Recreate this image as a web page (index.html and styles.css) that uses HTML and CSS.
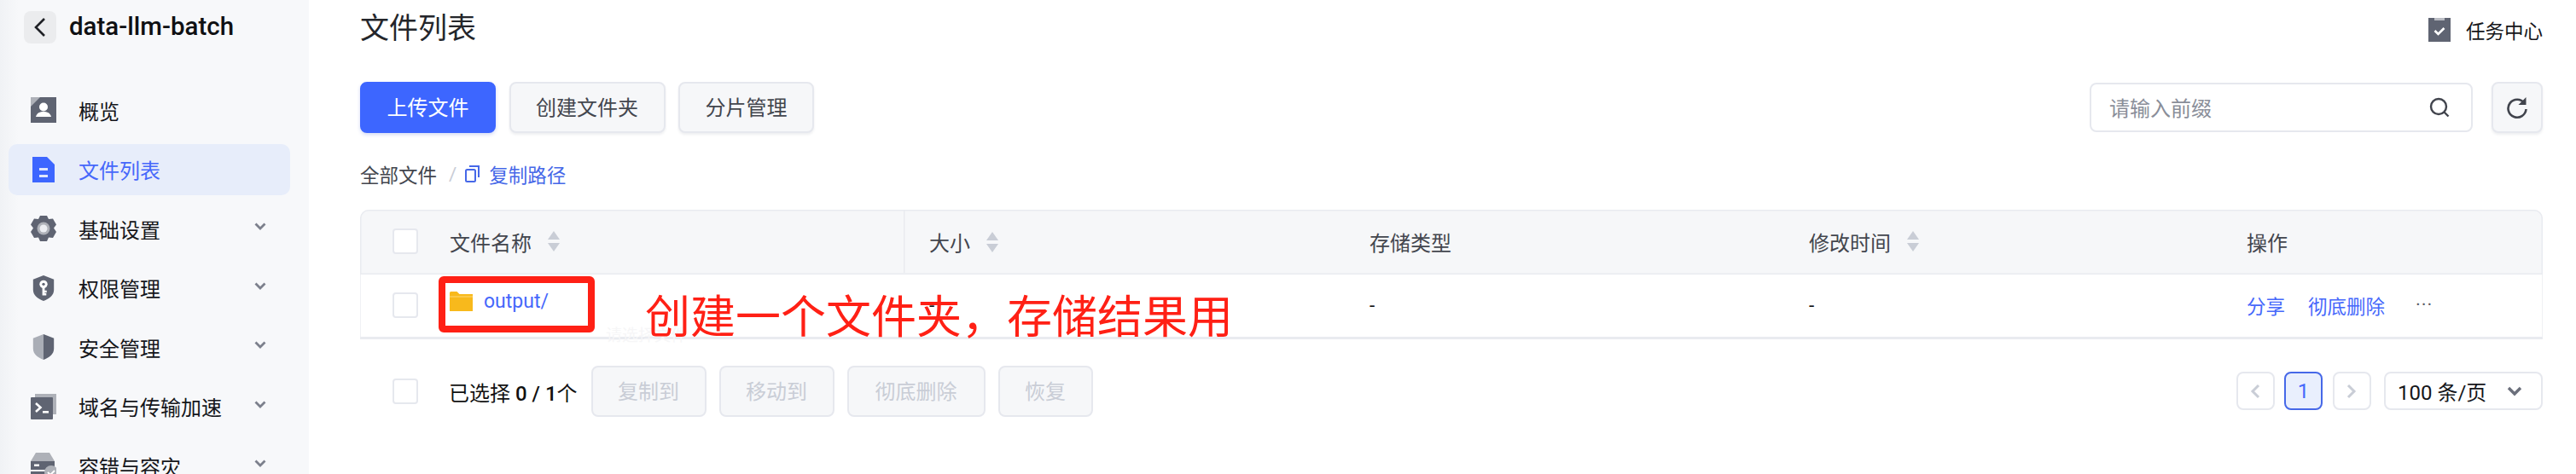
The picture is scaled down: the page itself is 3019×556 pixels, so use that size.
FILE: index.html
```html
<!DOCTYPE html>
<html lang="zh-CN">
<head>
<meta charset="utf-8">
<title>文件列表</title>
<link rel="stylesheet" href="styles.css">
</head>
<body>
<div class="app">
  <aside class="sidebar">
    <div class="bucket">
      <span class="back"><svg width="18" height="24" viewBox="0 0 18 24"><path d="M14 2 4 12l10 10" fill="none" stroke="#1f2126" stroke-width="2.6"/></svg></span>
      <span class="bucket-name">data-llm-batch</span>
    </div>
    <nav class="nav">
      <a class="nav-item">
        <svg class="nav-icon" viewBox="0 0 30 30"><path d="M0 0h30v30H0z" fill="#5f6472"/><path d="M0 0h11L0 11z" fill="#aeb1b8"/><circle cx="15" cy="11.500" r="5" fill="#fff"/><path d="M6 23c1-4.500 5-6 9-6s8 1.500 9 6z" fill="#fff"/></svg>
        <span>概览</span>
      </a>
      <a class="nav-item active">
        <svg class="nav-icon" viewBox="0 0 30 30"><path d="M2 0h17l9 9v21H2z" fill="#3d66ff"/><path d="M10 13h10v3H10zM10 21h10v3H10z" fill="#dfe6fb"/></svg>
        <span>文件列表</span>
      </a>
      <a class="nav-item">
        <svg class="nav-icon" viewBox="0 0 30 30"><path d="M11 0h8l2 4 5-.5 4 7-3 4 3 4.500-4 7-5-.5-2 4.500h-8l-2-4.500-5 .5-4-7 3-4.500-3-4 4-7 5 .5z" fill="#5f6472"/><circle cx="15" cy="15" r="7.500" fill="#aeb1b8"/><circle cx="15" cy="15" r="4.500" fill="#eceef2"/></svg>
        <span>基础设置</span>
        <svg class="chev" viewBox="0 0 14 10"><path d="M1.500 1.500 7 7l5.500-5.500" fill="none" stroke="#7c808c" stroke-width="2.800"/></svg>
      </a>
      <a class="nav-item">
        <svg class="nav-icon" viewBox="0 0 30 32"><path d="M15 0 28 5v13c0 7-6 11-13 14C8 29 2 25 2 18V5z" fill="#5f6472"/><circle cx="15" cy="11" r="5" fill="#fff"/><circle cx="15" cy="11" r="1.800" fill="#5f6472"/><path d="M13.500 15h3v10h-3zM16 19h3v2.500h-3zM16 22.500h2.500V25H16z" fill="#fff"/></svg>
        <span>权限管理</span>
        <svg class="chev" viewBox="0 0 14 10"><path d="M1.500 1.500 7 7l5.500-5.500" fill="none" stroke="#7c808c" stroke-width="2.800"/></svg>
      </a>
      <a class="nav-item">
        <svg class="nav-icon" viewBox="0 0 30 32"><path d="M15 0 2 5v13c0 7 6 11 13 14z" fill="#aaaeb6"/><path d="M15 0 28 5v13c0 7-6 11-13 14z" fill="#5f6472"/></svg>
        <span>安全管理</span>
        <svg class="chev" viewBox="0 0 14 10"><path d="M1.500 1.500 7 7l5.500-5.500" fill="none" stroke="#7c808c" stroke-width="2.800"/></svg>
      </a>
      <a class="nav-item">
        <svg class="nav-icon" viewBox="0 0 30 30"><path d="M5 0h25v24h-5V5H5z" fill="#aeb1b8"/><rect x="0" y="4" width="26" height="26" rx="1" fill="#5f6472"/><path d="m6 11 5.500 5L6 21" fill="none" stroke="#fff" stroke-width="2.600"/><path d="M14 20h7v2.600h-7z" fill="#fff"/></svg>
        <span>域名与传输加速</span>
        <svg class="chev" viewBox="0 0 14 10"><path d="M1.500 1.500 7 7l5.500-5.500" fill="none" stroke="#7c808c" stroke-width="2.800"/></svg>
      </a>
      <a class="nav-item">
        <svg class="nav-icon" viewBox="0 0 30 30"><path d="M6 0h16l6 10H0z" fill="#aeb1b8"/><path d="M0 10h28v10H0zM0 22h28v8H0z" fill="#5f6472"/><path d="M4 13.500h6v2.500H4z" fill="#fff"/><circle cx="24" cy="23" r="8" fill="#aeb1b8"/><path d="m20 23 3 3 5-5" fill="none" stroke="#fff" stroke-width="2"/></svg>
        <span>容错与容灾</span>
        <svg class="chev" viewBox="0 0 14 10"><path d="M1.500 1.500 7 7l5.500-5.500" fill="none" stroke="#7c808c" stroke-width="2.800"/></svg>
      </a>
    </nav>
  </aside>

  <main class="main">
    <header class="title-row">
      <h1 class="title">文件列表</h1>
      <a class="task-center">
        <svg class="task-icon" viewBox="0 0 26 28"><path d="M0 0h26v28H0z" fill="#5f6472"/><path d="M7 0h12v3H7z" fill="#b9bcc3"/><path d="m7.500 15 4 4 7-7" fill="none" stroke="#fff" stroke-width="2.600"/></svg>
        <span>任务中心</span>
      </a>
    </header>

    <div class="toolbar">
      <div class="btn-group">
        <button class="btn primary">上传文件</button>
        <button class="btn">创建文件夹</button>
        <button class="btn">分片管理</button>
      </div>
      <div class="tools">
        <div class="search">
          <span class="placeholder">请输入前缀</span>
          <svg class="search-icon" viewBox="0 0 24 24"><circle cx="11" cy="11" r="9" fill="none" stroke="#41444d" stroke-width="2.400"/><path d="m17.500 17.500 5 5" stroke="#41444d" stroke-width="2.400"/></svg>
        </div>
        <button class="btn icon-btn"><svg width="26" height="28" viewBox="0 0 26 28"><path d="M21.500 9A10.500 10.500 0 1 0 23.500 16" fill="none" stroke="#41444d" stroke-width="2.600"/><path d="M23.500 2v9h-9z" fill="#41444d"/></svg></button>
      </div>
    </div>

    <div class="crumbs">
      <span class="crumb">全部文件</span>
      <span class="sep">/</span>
      <a class="copy-path">
        <svg width="17" height="20" viewBox="0 0 17 20"><rect x="1" y="5" width="11" height="14" rx="1.500" fill="none" stroke="#4668e8" stroke-width="2"/><path d="M5 1h11v13" fill="none" stroke="#4668e8" stroke-width="2"/></svg>
        <span>复制路径</span>
      </a>
    </div>

    <section class="table">
      <div class="row head">
        <div class="cell check"><span class="checkbox"></span></div>
        <div class="cell">文件名称<span class="sort"></span></div>
        <div class="cell divided">大小<span class="sort"></span></div>
        <div class="cell">存储类型</div>
        <div class="cell">修改时间<span class="sort"></span></div>
        <div class="cell ops-head">操作</div>
      </div>
      <div class="row body">
        <div class="cell check"><span class="checkbox"></span></div>
        <div class="cell file">
          <svg class="folder" viewBox="0 0 27 23"><path d="M0 1.500Q0 0 1.500 0h7l3 3H27v20H0z" fill="#f8b91c"/><path d="M0 6h27" stroke="#fdd877" stroke-width="1"/></svg>
          <a class="file-link">output/</a>
        </div>
        <div class="cell">-</div>
        <div class="cell">-</div>
        <div class="cell">-</div>
        <div class="cell actions">
          <a>分享</a>
          <a>彻底删除</a>
          <span class="more">···</span>
        </div>
      </div>
    </section>

    <footer class="footer">
      <div class="selection">
        <span class="checkbox"></span>
        <span class="count">已选择 <b class="num">0 / 1</b>个</span>
        <div class="batch">
          <button class="btn disabled">复制到</button>
          <button class="btn disabled">移动到</button>
          <button class="btn disabled">彻底删除</button>
          <button class="btn disabled">恢复</button>
        </div>
      </div>
      <div class="pager">
        <span class="page"><svg width="12" height="18" viewBox="0 0 12 18"><path d="M10 2 3 9l7 7" fill="none" stroke="#c9cdd6" stroke-width="3"/></svg></span>
        <span class="page current">1</span>
        <span class="page"><svg width="12" height="18" viewBox="0 0 12 18"><path d="m2 2 7 7-7 7" fill="none" stroke="#c9cdd6" stroke-width="3"/></svg></span>
        <span class="page-size">100 条/页<svg width="18" height="12" viewBox="0 0 18 12"><path d="m2 2 7 7 7-7" fill="none" stroke="#6b6f7b" stroke-width="3.400"/></svg></span>
      </div>
    </footer>

    <div class="ghost">请选择文件</div>
    <div class="red-box"></div>
    <div class="annotation">创建一个文件夹，存储结果用</div>
  </main>
</div>
</body>
</html>
```

FILE: styles.css
```css
* { box-sizing: border-box; }
html, body { margin: 0; height: 100%; }
body {
  background: #fff;
  color: #111;
  font-family: Roboto, "Noto Sans CJK SC", sans-serif;
  font-size: 22.5px;
  overflow: hidden;
}
button { font: inherit; }
a { color: inherit; text-decoration: none; }

.app { display: flex; width: 3019px; height: 556px; overflow: hidden; }

.sidebar {
  flex: 0 0 362px;
  height: 556px;
  overflow: hidden;
  background: linear-gradient(90deg, #f0f2f5 0, #f7f8fa 22px);
}
.bucket { display: flex; align-items: center; gap: 15px; height: 38px; margin: 13px 0 0 28px; }
.back {
  display: flex; align-items: center; justify-content: center;
  width: 38px; height: 38px; border-radius: 8px; background: #ebecee;
}
.bucket-name { font-size: 29.5px; font-weight: 500; color: #0f1013; margin-top: -2px; }
.nav { display: flex; flex-direction: column; gap: 9.5px; margin: 48px 22px 0 10px; }
.nav-item {
  flex: none;
  display: flex; align-items: center;
  height: 60px; padding: 0 28px 0 26px;
  border-radius: 10px; font-size: 24px; color: #15161a;
}
.nav-item.active { background: #e7edfa; color: #4668fb; }
.nav-icon { width: 30px; height: 30px; flex: none; margin-right: 26px; }
.nav-item span { flex: 1; }
.chev { width: 14px; height: 10px; flex: none; margin-top: -4px; }

.main { position: relative; flex: 1; padding: 0 39px 0 60px; min-width: 0; }
.title-row { display: flex; justify-content: space-between; align-items: center; height: 66px; }
.title { margin: 0; font-size: 34px; font-weight: 400; color: #24262b; line-height: 66px; }
.task-center { display: flex; align-items: center; gap: 18px; font-size: 22.5px; color: #15161a; margin-top: 4px; }
.task-icon { width: 26px; height: 28px; }

.toolbar { display: flex; justify-content: space-between; align-items: flex-start; margin-top: 30px; }
.btn-group { display: flex; gap: 15.5px; }
.btn {
  height: 60px; padding: 0 29.5px 3px;
  border: 2px solid #e6e8ee; border-radius: 8px;
  background: #f6f7f9; color: #43464e; font-size: 24px;
  box-shadow: 0 2px 3px rgba(40, 50, 80, .08);
}
.btn.primary { background: #3d66ff; border-color: #3d66ff; color: #fff; box-shadow: 0 2px 4px rgba(40, 70, 200, .2); }
.tools { display: flex; gap: 22px; }
.search {
  display: flex; align-items: center; justify-content: space-between;
  width: 449px; height: 58px; margin-top: 1px; padding: 0 25px 2px 21px;
  border: 2px solid #e6e8ee; border-radius: 8px; background: #fff;
}
.placeholder { font-size: 24px; color: #8a8e99; }
.search-icon { width: 24px; height: 24px; margin-top: 2px; }
.icon-btn { width: 60px; padding: 0; display: flex; align-items: center; justify-content: center; }

.crumbs { display: flex; align-items: center; height: 34px; margin-top: 31px; color: #43464e; }
.sep { margin: 0 10px 0 14px; color: #c9cdd6; }
.copy-path { display: flex; align-items: center; gap: 11px; color: #4668e8; }

.table { margin-top: 25px; }
.row { display: grid; grid-template-columns: 75px 562px 516px 515px 513px 1fr; }
.head {
  height: 76px; background: #f6f7f9; color: #43464e; font-size: 24px;
  box-shadow: inset 0 0 0 1.500px #e9ebf0; border-radius: 10px 10px 0 0; padding-bottom: 2px;
}
.body { height: 76px; border-bottom: 3px solid #e9ebf0; box-shadow: inset 1px 0 0 #f0f1f4, inset -1px 0 0 #f0f1f4; }
.cell { display: flex; align-items: center; padding-left: 30px; }
.cell.check { padding-left: 38px; }
.cell.divided { box-shadow: inset 1.500px 0 0 #e9ebf0; margin-top: 1px; }
.body .cell { padding-bottom: 2px; }
.sort {
  position: relative; width: 15px; height: 24px; margin-left: 19px;
}
.sort::before, .sort::after {
  content: ""; position: absolute; left: 0;
  border-left: 7.500px solid transparent; border-right: 7.500px solid transparent;
}
.sort::before { top: 0; border-bottom: 10px solid #c9cdd6; }
.sort::after { bottom: 0; border-top: 10px solid #c9cdd6; }
.checkbox {
  display: block; flex: none; width: 30px; height: 30px;
  background: #fff; border: 2px solid #e6e8ee; border-radius: 4px;
}
.file { gap: 13px; margin-top: -6px; height: 76px; }
.folder { width: 27px; height: 23px; }
.file-link { color: #4668fb; font-size: 23px; }
.actions { gap: 25px; color: #4668fb; }
.actions a:first-child { margin-right: 2px; }
.more { color: #5a5d66; font-size: 22px; margin-left: 11px; letter-spacing: 1px; }

.footer { display: flex; justify-content: space-between; align-items: flex-start; margin-top: 31px; }
.selection { display: flex; align-items: center; gap: 36px; padding-left: 38px; }
.count { font-size: 24px; font-weight: 400; color: #111; white-space: nowrap; }
.num { font-weight: 500; }
.batch { display: flex; gap: 15px; margin-left: -20px; }
.btn.disabled { color: #c9cdd6; box-shadow: none; padding: 0 0 3px; width: 135px; }
.btn.disabled:nth-child(3) { width: 162px; }
.btn.disabled:nth-child(4) { width: 111px; }
.pager { display: flex; gap: 11.500px; margin-top: 7px; }
.page {
  display: flex; align-items: center; justify-content: center;
  width: 45px; height: 45px; border: 2px solid #e6e8ee; border-radius: 8px; background: #fff;
}
.page.current { background: #e9effd; border-color: #4668e8; color: #4668fb; font-size: 24px; }
.page-size {
  display: flex; align-items: center; justify-content: space-between;
  width: 186px; height: 45px; margin-left: 4px; padding: 0 22px 0 14px;
  border: 2px solid #e6e8ee; border-radius: 8px; background: #fff; font-size: 24px; color: #15161a;
}

.ghost { position: absolute; left: 348px; top: 378px; font-size: 19px; color: #f6f6f7; }
.red-box {
  position: absolute; left: 152px; top: 324px; width: 183px; height: 66px;
  border: 8px solid #ff2015; border-radius: 6px;
}
.annotation {
  position: absolute; left: 394px; top: 340px; height: 57px; overflow: hidden;
  font-size: 53px; line-height: 66px; color: #ff2015; white-space: nowrap;
}
```
